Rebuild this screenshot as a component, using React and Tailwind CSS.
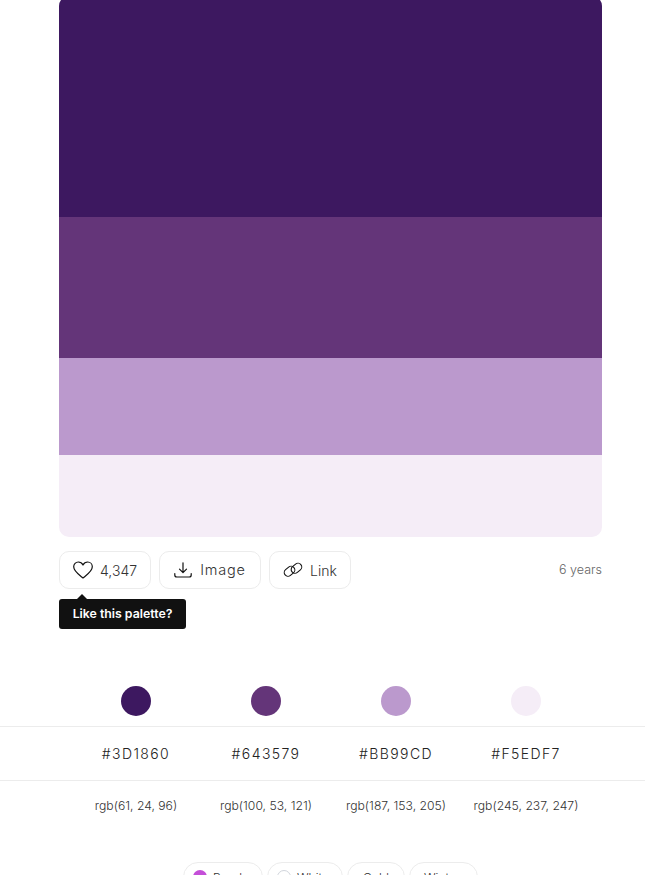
const colors = [
  { hex: "#3D1860", rgb: "rgb(61, 24, 96)", dot: "bg-[#3d1860]" },
  { hex: "#643579", rgb: "rgb(100, 53, 121)", dot: "bg-[#643579]" },
  { hex: "#BB99CD", rgb: "rgb(187, 153, 205)", dot: "bg-[#bb99cd]" },
  { hex: "#F5EDF7", rgb: "rgb(245, 237, 247)", dot: "bg-[#f5edf7]" },
];

const tags = [
  { name: "Purple", dot: "bg-[#c44fd8]", w: "w-[80px]" },
  { name: "White", dot: "bg-white border border-gray-300", w: "w-[76px]" },
  { name: "Gold", w: "w-[58px] pl-[15px]" },
  { name: "Winter", w: "w-[69px] pl-[14px]" },
];

function HeartIcon() {
  return (
    <svg width="20" height="18" viewBox="0 0 20 18" fill="none" stroke="#111" strokeWidth="1.2" strokeLinejoin="round">
      <path d="M10 17C7 14.500 0.700 10.500 0.700 5.800 0.700 3 2.800 1 5.300 1 7.300 1 9 2 10 4 11 2 12.700 1 14.700 1 17.200 1 19.300 3 19.300 5.800 19.300 10.500 13 14.500 10 17Z" />
    </svg>
  );
}

function DownloadIcon() {
  return (
    <svg width="18" height="16" viewBox="0 0 18 16" fill="none" stroke="#111" strokeWidth="1.2" strokeLinecap="round" strokeLinejoin="round">
      <path d="M9 0.800V10.500M5.500 7.200 9 10.700 12.500 7.200" />
      <path d="M0.800 11.500V13C0.800 14.300 1.500 15 2.800 15H15.200C16.500 15 17.200 14.300 17.200 13V11.500" />
    </svg>
  );
}

function LinkIcon() {
  return (
    <svg width="20" height="18" viewBox="0 0 20 18" fill="none" stroke="#111" strokeWidth="1.1">
      <rect x="0.800" y="6.500" width="11.500" height="7.500" rx="3.750" transform="rotate(-40 6.500 10.250)" />
      <rect x="7.700" y="3.500" width="11.500" height="7.500" rx="3.750" transform="rotate(-40 13.500 7.250)" />
    </svg>
  );
}

function ActionButton({ children, className }) {
  return (
    <button className={`h-[38px] flex items-center justify-center border border-[#ececec] rounded-[10px] text-[14.5px] font-light text-[#333] ${className}`}>
      {children}
    </button>
  );
}

export default function App() {
  return (
    <div className="h-[875px] overflow-hidden bg-white font-['Inter','Noto_Sans',sans-serif]">
      {/* Palette */}
      <div className="ml-[59px] mr-[43px] -mt-[4px] rounded-[10px] overflow-hidden">
        <div className="h-[221px] bg-[#3d1860]" />
        <div className="h-[141px] bg-[#643579]" />
        <div className="h-[97px] bg-[#bb99cd]" />
        <div className="h-[82px] bg-[#f5edf7]" />
      </div>

      {/* Actions */}
      <div className="ml-[59px] mr-[43px] mt-[14px] flex items-center justify-between">
        <div className="flex gap-2">
          <div className="relative">
            <ActionButton className="w-[92px] gap-[7px]">
              <HeartIcon />
              <span className="text-[14px]">4,347</span>
            </ActionButton>
            <div className="absolute left-0 top-[48px] h-[30px] w-[127px] flex items-center justify-center rounded-[3px] bg-[#111] text-[12.3px] font-semibold text-white whitespace-nowrap">
              <span className="absolute left-[18px] -top-[5px] w-0 h-0 border-x-[5px] border-x-transparent border-b-[5px] border-b-[#111]" />
              Like this palette?
            </div>
          </div>
          <ActionButton className="w-[102px] gap-[8px]">
            <DownloadIcon />
            <span className="tracking-[0.8px]">Image</span>
          </ActionButton>
          <ActionButton className="w-[82px] gap-[7px]">
            <LinkIcon />
            <span className="text-[14px]">Link</span>
          </ActionButton>
        </div>
        <span className="text-[12.5px] font-light text-[#666]">6 years</span>
      </div>

      {/* Color dots */}
      <div className="mt-[97px] pl-[71px] pr-[54px] grid grid-cols-4">
        {colors.map((c) => (
          <div key={c.hex} className="flex justify-center">
            <div className={`w-[30px] h-[30px] rounded-full ${c.dot}`} />
          </div>
        ))}
      </div>

      {/* Hex */}
      <div className="mt-[10px] h-[55px] border-y border-[#ececec] pl-[71px] pr-[54px] grid grid-cols-4 items-center">
        {colors.map((c) => (
          <div key={c.hex} className="text-center text-[14px] font-light tracking-[1.4px] text-[#222]">
            {c.hex}
          </div>
        ))}
      </div>

      {/* Rgb */}
      <div className="mt-[16px] pl-[71px] pr-[54px] grid grid-cols-4">
        {colors.map((c) => (
          <div key={c.hex} className="text-center text-[12.2px] font-light text-[#333] whitespace-nowrap">
            {c.rgb}
          </div>
        ))}
      </div>

      {/* Tags */}
      <div className="mt-[47px] flex justify-center gap-[4px] pl-[16px]">
        {tags.map((t) => (
          <div key={t.name} className={`h-[30px] flex items-center gap-[6px] pl-[9px] border border-[#ececec] rounded-[15px] text-[12px] font-light text-[#333] ${t.w}`}>
            {t.dot && <span className={`w-[14px] h-[14px] rounded-full ${t.dot}`} />}
            <span className="mt-[2px]">{t.name}</span>
          </div>
        ))}
      </div>
    </div>
  );
}
